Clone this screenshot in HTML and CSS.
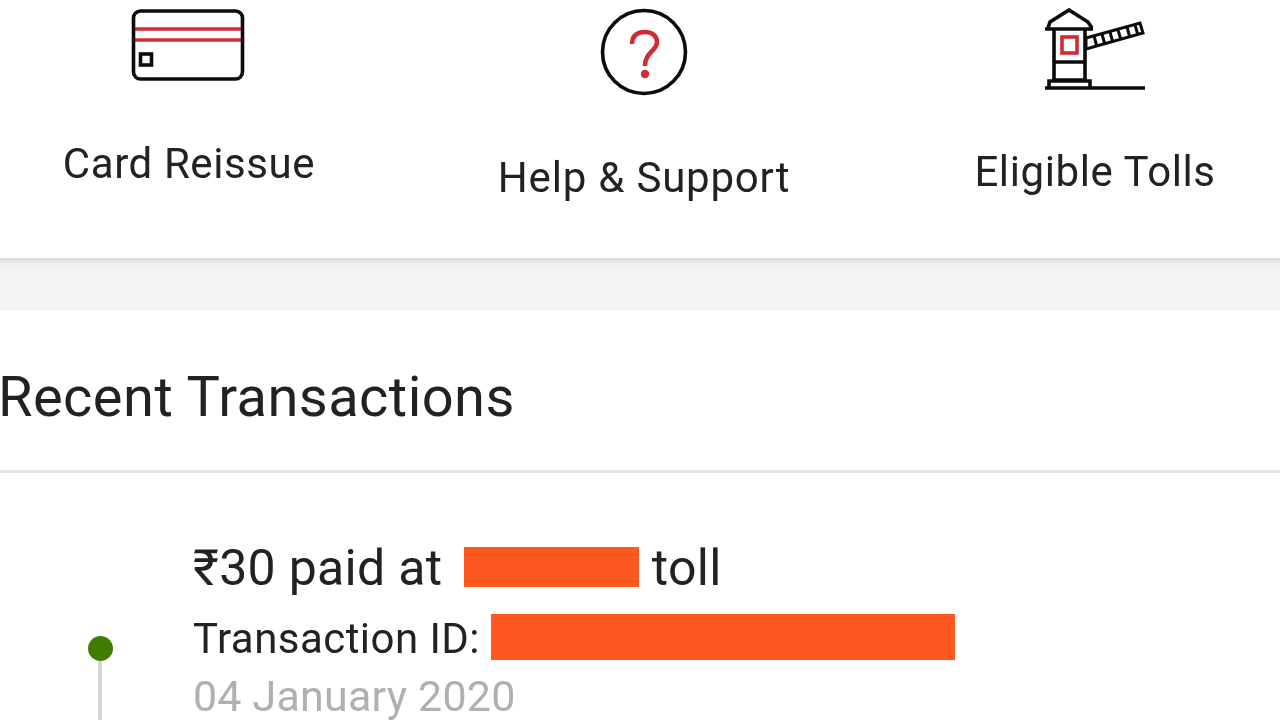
FILE: index.html
```html
<!DOCTYPE html>
<html lang="en">
<head>
    <meta charset="UTF-8">
    <meta name="viewport" content="width=device-width, initial-scale=1.0">
    <title>Recent Transactions</title>
    <link rel="stylesheet" href="styles.css">
</head>
<body>
    <div class="services">
        <div class="service service-card">
            <svg class="icon" width="114" height="74" viewBox="0 0 114 74">
                <line x1="4" y1="21" x2="110" y2="21" class="red"/>
                <line x1="4" y1="32" x2="110" y2="32" class="red"/>
                <rect x="2.5" y="3" width="109" height="68" rx="7" class="ink"/>
                <rect x="9.5" y="46" width="11" height="11" class="ink"/>
            </svg>
            <span class="service-label">Card Reissue</span>
        </div>
        <div class="service service-help">
            <svg class="icon" width="88" height="88" viewBox="0 0 88 88">
                <circle cx="44" cy="44" r="41.5" class="ink"/>
                <path d="M32 36 C32 27 38 24 45 24 C52 24 57 28 57 34 C57 43 45 44 45 58" class="red bold"/>
                <circle cx="45" cy="66" r="4.2" class="red-dot"/>
            </svg>
            <span class="service-label">Help &amp; Support</span>
        </div>
        <div class="service service-tolls">
            <svg class="icon" width="102" height="82" viewBox="0 0 102 82">
                <path d="M4 20 L6 14 L25 2 L44 14 L48 20" class="ink"/>
                <path d="M1 21 H49 M10 21 V72 M41 21 V72 M10 54 H41 M8 72 H43 M5 79 V73 H46 V79" class="ink"/>
                <rect x="18" y="29" width="15" height="16" class="red"/>
                <path d="M1 80 H101" class="ink"/>
                <path d="M42 30 L96 15 L99 25 L42 41 Z M50 28 L53 39 M58 26 L61 37 M66 24 L69 35 M74 22 L77 32 M83 19 L86 30 M91 17 L94 27" class="ink thin"/>
            </svg>
            <span class="service-label">Eligible Tolls</span>
        </div>
    </div>

    <div class="band"></div>

    <h2 class="section-title">Recent Transactions</h2>

    <div class="txn">
        <div class="timeline">
            <span class="timeline-dot"></span>
            <span class="timeline-line"></span>
        </div>
        <div class="txn-body">
            <div class="txn-title">₹30 paid at <span class="redact redact-toll"></span> toll</div>
            <div class="txn-id">Transaction ID: <span class="redact redact-id"></span></div>
            <div class="txn-date">04 January 2020</div>
        </div>
    </div>
</body>
</html>
```

FILE: styles.css
```css
html {
    height: 720px;
    overflow: hidden;
}
/* body and the full width rows run past the window so the blur doesn't fade at the edges */
body {
    margin: 0 -6px;
    padding: 0 6px;
    font-family: Roboto, "Liberation Sans", sans-serif;
    background-color: #fff;
    color: #222;
    filter: blur(0.5px);
}
.services {
    display: grid;
    grid-template-columns: 378px 532px 370px;
    height: 258px;
}
.service {
    display: flex;
    flex-direction: column;
    align-items: center;
    padding-top: 8px;
}
.service-card .icon {
    margin-right: 2px;
}
.service-label {
    font-size: 42px;
    line-height: 48px;
    letter-spacing: 0.6px;
    white-space: nowrap;
    margin-top: 58px;
}
.service-help .service-label {
    letter-spacing: 0.8px;
}
.icon {
    display: block;
    flex: none;
}
.ink {
    fill: none;
    stroke: #0c0c0c;
    stroke-width: 3.6;
}
.thin {
    stroke-width: 3;
}
.red {
    fill: none;
    stroke: #cf2c35;
    stroke-width: 3.6;
}
.bold {
    stroke-width: 4.6;
}
.red-dot {
    fill: #cf2c35;
}
.band {
    height: 52px;
    margin: 0 -6px;
    box-sizing: border-box;
    background-color: #f4f4f4;
    border-top: 2px solid #dcdcdc;
    border-bottom: 2px solid #f0f0f0;
    box-shadow: inset 0 4px 6px -2px rgba(0,0,0,0.1);
}
.section-title {
    margin: 0 -6px;
    height: 163px;
    box-sizing: border-box;
    padding: 56px 6px 0;
    font-size: 56px;
    line-height: 62px;
    letter-spacing: 0.45px;
    font-weight: 400;
    text-indent: -2px;
    border-bottom: 3px solid #e4e0e4;
}
.txn {
    display: flex;
    height: 247px;
    overflow: hidden;
}
.timeline {
    width: 193px;
    box-sizing: border-box;
    padding: 163px 0 0 7px;
    display: flex;
    flex-direction: column;
    align-items: center;
    flex: none;
}
.timeline-dot {
    width: 25px;
    height: 25px;
    border-radius: 50%;
    background-color: #3f7d00;
    flex: none;
}
.timeline-line {
    width: 4px;
    height: 80px;
    background-color: #d5d5d5;
    flex: none;
}
.txn-body {
    padding-top: 67px;
}
.txn-title {
    display: flex;
    align-items: center;
    font-size: 50px;
    line-height: 56px;
    letter-spacing: 0.3px;
    white-space: pre;
}
.txn-id {
    display: flex;
    align-items: center;
    font-size: 42px;
    line-height: 48px;
    letter-spacing: 0.45px;
    white-space: pre;
    margin-top: 18px;
}
.txn-date {
    font-size: 43px;
    line-height: 46px;
    letter-spacing: 0.2px;
    color: #b0b0b0;
    margin-top: 9px;
}
.redact {
    display: block;
    background-color: #ff5722;
}
.redact-toll {
    width: 175px;
    height: 40px;
    margin-left: 9px;
    margin-bottom: 2px;
}
.redact-id {
    width: 464px;
    height: 46px;
    margin-bottom: 4px;
}
```
